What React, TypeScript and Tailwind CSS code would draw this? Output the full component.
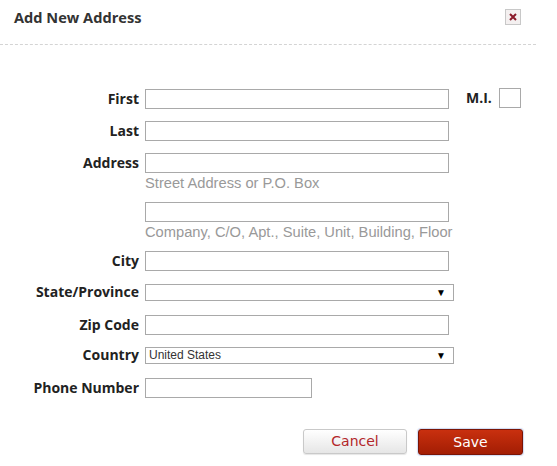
import React from 'react';

const labelCls = "w-[139px] text-right font-bold text-[14px] text-[#222] font-['Open_Sans',sans-serif] leading-5";
const inputCls = "block h-5 border border-[#a9a9a9] bg-white";
const hintCls = "mt-[1px] text-[14.7px] leading-[18px] text-[#999] font-['Liberation_Sans',Arial,sans-serif]";

function Row({ label, children, className = '' }: { label: string; children: React.ReactNode; className?: string }) {
  return (
    <div className={`flex items-start ${className}`}>
      <label className={labelCls}>{label}</label>
      <div className="ml-[6px]">{children}</div>
    </div>
  );
}

function Select({ value = '' }: { value?: string }) {
  return (
    <div className="flex h-[17px] w-[309px] items-center justify-between border border-[#a9a9a9] bg-white pl-[3px] pr-[7px]">
      <span className="text-[12px] leading-none text-[#333] font-['Liberation_Sans',Arial,sans-serif]">{value}</span>
      <span className="text-[10px] leading-none text-black">▼</span>
    </div>
  );
}

export default function App() {
  return (
    <div className="w-[536px] h-[466px] bg-white font-['Open_Sans',sans-serif]">
      {/* Header */}
      <div className="flex h-[45px] items-start justify-between border-b border-dashed border-[#d4d4d4] pl-[14px] pr-[15px]">
        <h1 className="mt-[7px] text-[14.6px] font-bold text-[#333]">Add New Address</h1>
        <button className="mt-[9px] flex h-[16px] w-[16px] items-center justify-center border border-[#c8c8c8] bg-[#f4f0f0]">
          <svg width="8" height="8" viewBox="0 0 8 8">
            <path d="M1 1 L7 7 M7 1 L1 7" stroke="#8b1a2a" strokeWidth="2" />
          </svg>
        </button>
      </div>

      {/* Form */}
      <div className="pt-[43px]">
        <div className="flex items-start">
          <Row label="First" className="mt-[1px]">
            <input className={`${inputCls} w-[304px]`} />
          </Row>
          <span className="ml-[17px] font-bold text-[14px] leading-5 text-[#222]">M.I.</span>
          <input className={`${inputCls} ml-[7px] w-[22px]`} />
        </div>

        <Row label="Last" className="mt-[12px]">
          <input className={`${inputCls} w-[304px]`} />
        </Row>

        <Row label="Address" className="mt-[12px]">
          <input className={`${inputCls} w-[304px]`} />
          <div className={hintCls}>Street Address or P.O. Box</div>
          <input className={`${inputCls} mt-[10px] w-[304px]`} />
          <div className={hintCls}>Company, C/O, Apt., Suite, Unit, Building, Floor</div>
        </Row>

        <Row label="City" className="mt-[10px]">
          <input className={`${inputCls} w-[304px]`} />
        </Row>

        <div className="mt-[11px] flex items-center">
          <label className={labelCls}>State/Province</label>
          <div className="ml-[6px]"><Select /></div>
        </div>

        <Row label="Zip Code" className="mt-[13px]">
          <input className={`${inputCls} w-[304px]`} />
        </Row>

        <div className="mt-[10px] flex items-center">
          <label className={labelCls}>Country</label>
          <div className="ml-[6px]"><Select value="United States" /></div>
        </div>

        <Row label="Phone Number" className="mt-[13px]">
          <input className={`${inputCls} w-[167px]`} />
        </Row>

        {/* Buttons */}
        <div className="mt-[31px] flex justify-end gap-[11px] pr-[13px]">
          <button className="h-[25px] w-[104px] rounded-[3px] border border-[#c9c9c9] bg-gradient-to-b from-white to-[#e6e6e6] text-[14px] text-[#b3262a] font-['DejaVu_Sans',Verdana,sans-serif] shadow-[0_1px_1px_rgba(0,0,0,0.1)]">
            Cancel
          </button>
          <button className="h-[26px] w-[105px] rounded-[3px] border border-[#7a1405] bg-gradient-to-b from-[#c9300f] to-[#a31d04] text-[14px] text-white font-['DejaVu_Sans',Verdana,sans-serif] shadow-[0_0_1px_1px_rgba(120,150,220,0.35)]">
            Save
          </button>
        </div>
      </div>
    </div>
  );
}
